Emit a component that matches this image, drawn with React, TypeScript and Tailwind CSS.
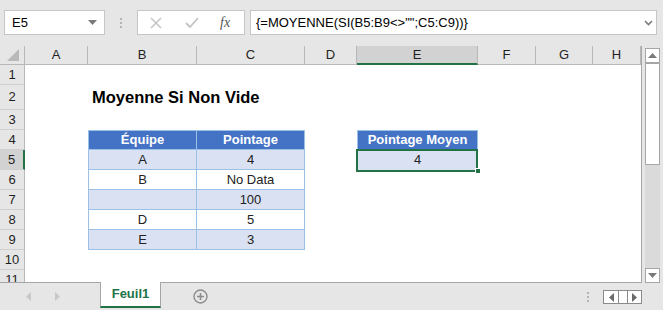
import React from 'react';

const LETTERS = ['A', 'B', 'C', 'D', 'E', 'F', 'G', 'H'];
const ROWS = [1, 2, 3, 4, 5, 6, 7, 8, 9, 10, 11];

const DATA: Record<string, string> = {
  B2: 'Moyenne Si Non Vide',
  B4: 'Équipe', C4: 'Pointage', E4: 'Pointage Moyen',
  B5: 'A', C5: '4', E5: '4',
  B6: 'B', C6: 'No Data',
  C7: '100',
  B8: 'D', C8: '5',
  B9: 'E', C9: '3',
};

function cellClass(col: string, row: number) {
  const inTable = (col === 'B' || col === 'C') && row >= 4 && row <= 9;
  if (col === 'B' && row === 2) return 'relative z-10 flex items-center pl-[4px] whitespace-nowrap text-[16.5px] font-bold text-black';
  if (inTable && row === 4) {
    return col === 'B'
      ? 'flex items-center justify-center bg-[#4472c4] text-white font-bold border border-[#9bc2e6]'
      : 'flex items-center justify-center bg-[#4472c4] text-white font-bold border-t border-r border-b border-[#9bc2e6]';
  }
  if (inTable) {
    const band = row % 2 === 1;
    if (col === 'B') {
      return band
        ? 'flex items-center justify-center bg-[#d9e1f2] border-l border-r border-b border-[#9bc2e6]'
        : 'flex items-center justify-center bg-white border-l border-r border-b border-[#9bc2e6]';
    }
    return band
      ? 'flex items-center justify-center bg-[#d9e1f2] border-r border-b border-[#9bc2e6]'
      : 'flex items-center justify-center bg-white border-r border-b border-[#9bc2e6]';
  }
  if (col === 'E' && row === 4) return 'flex items-center justify-center bg-[#4472c4] text-white font-bold border border-[#9bc2e6] whitespace-nowrap';
  if (col === 'E' && row === 5) return 'relative flex items-center justify-center bg-[#d9e1f2]';
  return '';
}

function Tri({ dir, color }: { dir: 'up' | 'down' | 'left' | 'right'; color: string }) {
  const pts = {
    up: '0,5 4.5,0 9,5',
    down: '0,0 9,0 4.5,5',
    left: '5,0 5,9 0,4.5',
    right: '0,0 0,9 5,4.5',
  }[dir];
  const vertical = dir === 'up' || dir === 'down';
  return (
    <svg width={vertical ? 9 : 5} height={vertical ? 5 : 9} viewBox={vertical ? '0 0 9 5' : '0 0 5 9'}>
      <polygon points={pts} fill={color} />
    </svg>
  );
}

function Dots() {
  return (
    <div className="flex flex-col gap-[2px]">
      <div className="w-[2px] h-[2px] bg-[#b4b4b4]" />
      <div className="w-[2px] h-[2px] bg-[#b4b4b4]" />
      <div className="w-[2px] h-[2px] bg-[#b4b4b4]" />
    </div>
  );
}

export default function App() {
  return (
    <div className="w-[663px] h-[310px] bg-[#e6e6e6] flex flex-col overflow-hidden font-['Liberation_Sans',Arial,sans-serif] text-[13px] text-[#222]">
      {/* formula bar */}
      <div className="h-[46px] flex items-start pt-[10px]">
        <div className="ml-[4px] w-[101px] h-[25px] bg-white border border-[#c6c6c6] flex items-center pl-[7px]">
          <span className="text-black">E5</span>
          <div className="ml-auto mr-[7px] flex"><Tri dir="down" color="#7a7a7a" /></div>
        </div>
        <div className="w-[32px] h-[25px] flex items-center justify-center"><Dots /></div>
        <div className="w-[108px] h-[25px] bg-white border border-[#c6c6c6] flex items-center pl-[12px]">
          <svg width="12" height="12" viewBox="0 0 12 12">
            <path d="M1 1 L11 11 M11 1 L1 11" stroke="#c4c4c4" strokeWidth="1.5" fill="none" />
          </svg>
          <svg className="ml-[23px]" width="14" height="11" viewBox="0 0 14 11">
            <path d="M1 6 L5 10 L13 1" stroke="#c4c4c4" strokeWidth="1.8" fill="none" />
          </svg>
          <span className="ml-[21px] italic font-['Liberation_Serif',serif] text-[14px] text-[#555]">fx</span>
        </div>
        <div className="ml-[5px] w-[407px] h-[25px] bg-white border border-[#c6c6c6] flex items-center pl-[5px]">
          <span className="text-black whitespace-nowrap">{'{=MOYENNE(SI(B5:B9<>"";C5:C9))}'}</span>
          <svg className="ml-auto mr-[3px]" width="9" height="6" viewBox="0 0 9 6">
            <path d="M1 1 L4.5 4.5 L8 1" stroke="#7a7a7a" strokeWidth="1.6" fill="none" />
          </svg>
        </div>
      </div>

      {/* sheet */}
      <div className="flex">
        <div className="grid grid-cols-[25px_63px_109px_108px_52px_121px_58px_57px_48px] grid-rows-[19px_20px_25px_20px_20px_20px_20px_20px_20px_20px_20px_12px] border-r border-b border-[#a6a6a6] bg-white">
          <div className="relative bg-[#e6e6e6] border-r border-b border-[#b8b8b8]">
            <svg className="absolute right-[5px] bottom-[3px]" width="12" height="12" viewBox="0 0 12 12">
              <polygon points="12,0 12,12 0,12" fill="#b9b9b9" />
            </svg>
          </div>
          {LETTERS.map(l => (
            <div
              key={l}
              className={
                l === 'E'
                  ? 'flex items-center justify-center bg-[#d2d2d2] border-r border-[#b8b8b8] border-b-2 border-b-[#217346] text-[#1f1f1f]'
                  : 'flex items-center justify-center bg-[#e6e6e6] border-r border-b border-[#b8b8b8] text-[#1f1f1f]'
              }
            >
              {l}
            </div>
          ))}
          {ROWS.map(r => (
            <React.Fragment key={r}>
              <div
                className={
                  r === 5
                    ? 'flex items-center justify-center bg-[#d2d2d2] border-b border-[#d0d0d0] border-r-2 border-r-[#217346] text-[#1f1f1f]'
                    : r === 11
                      ? 'flex items-start justify-center bg-[#e6e6e6] border-r border-[#b8b8b8] overflow-hidden text-[#1f1f1f]'
                      : 'flex items-center justify-center bg-[#e6e6e6] border-b border-[#d0d0d0] border-r border-r-[#b8b8b8] text-[#1f1f1f]'
                }
              >
                <span className="leading-[20px]">{r}</span>
              </div>
              {LETTERS.map(l => {
                const key = `${l}${r}`;
                return (
                  <div key={key} className={cellClass(l, r)}>
                    {DATA[key] ?? ''}
                    {key === 'E5' && (
                      <>
                        <div className="absolute -left-px -top-px right-0 -bottom-[2px] border-2 border-[#217346]" />
                        <div className="absolute -right-[3px] -bottom-[4px] w-[6px] h-[6px] bg-[#217346] border border-white" />
                      </>
                    )}
                  </div>
                );
              })}
            </React.Fragment>
          ))}
        </div>

        {/* vertical scrollbar */}
        <div className="ml-[3px] mt-[2px] w-[15px] flex flex-col">
          <div className="h-[15px] bg-white border border-[#a6a6a6] flex items-center justify-center">
            <Tri dir="up" color="#7a7a7a" />
          </div>
          <div className="h-[103px] bg-white border border-t-2 border-[#a6a6a6] -mt-px" />
          <div className="flex-1 bg-[#dadada]" />
          <div className="h-[15px] bg-white border border-[#a6a6a6] flex items-center justify-center">
            <Tri dir="down" color="#7a7a7a" />
          </div>
        </div>
      </div>

      {/* tabs */}
      <div className="flex-1 flex items-stretch">
        <div className="w-[100px] flex items-center pl-[26px] gap-[24px]">
          <Tri dir="left" color="#c8c8c8" />
          <Tri dir="right" color="#c8c8c8" />
        </div>
        <div className="-mt-px mb-[2px] w-[61px] bg-white border-l border-r border-[#a6a6a6] border-b-2 border-b-[#217346] flex items-center justify-center font-bold text-[#217346]">
          Feuil1
        </div>
        <div className="ml-[32px] flex items-center">
          <svg width="15" height="15" viewBox="0 0 15 15">
            <circle cx="7.5" cy="7.5" r="6.5" stroke="#8c8c8c" strokeWidth="1.4" fill="none" />
            <path d="M7.5 4 V11 M4 7.5 H11" stroke="#8c8c8c" strokeWidth="1.6" />
          </svg>
        </div>
        <div className="ml-[379px] flex items-center"><Dots /></div>
        <div className="ml-[14px] mt-[7px] h-[14px] w-[39px] flex border border-[#8a8a8a] bg-white">
          <div className="w-[15px] flex items-center justify-center border-r border-[#8a8a8a]">
            <Tri dir="left" color="#6a6a6a" />
          </div>
          <div className="w-[9px] border-r border-[#8a8a8a]" />
          <div className="flex-1 flex items-center justify-center">
            <Tri dir="right" color="#6a6a6a" />
          </div>
        </div>
      </div>
    </div>
  );
}
